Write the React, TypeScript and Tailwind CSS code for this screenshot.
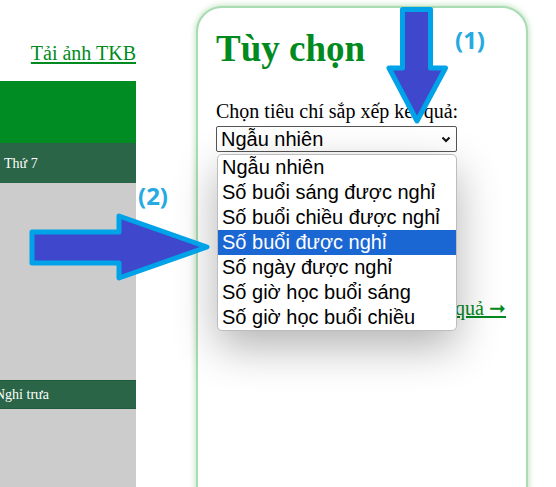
import React from "react";

const options = [
  "Ngẫu nhiên",
  "Số buổi sáng được nghỉ",
  "Số buổi chiều được nghỉ",
  "Số buổi được nghỉ",
  "Số ngày được nghỉ",
  "Số giờ học buổi sáng",
  "Số giờ học buổi chiều",
];

export default function App() {
  return (
    <div className="relative w-[556px] h-[487px] overflow-hidden bg-white flex font-['Liberation_Serif',serif]">
      {/* left column */}
      <div className="w-[136px] shrink-0 flex flex-col">
        <div className="h-[81px] flex items-start justify-end pt-[42px]">
          <a className="text-[20px] leading-[23px] text-[#008a20] underline decoration-[2px] underline-offset-[2px]" href="#">
            Tải ảnh TKB
          </a>
        </div>
        <div className="h-[62px] bg-[#008c22]" />
        <div className="h-[40px] bg-[#2a6547] flex items-center pl-[4px] text-white text-[14px]">Thứ 7</div>
        <div className="flex-1 bg-[#cccccc] flex flex-col">
          <div className="h-[197px]" />
          <div className="h-[29px] bg-[#2a6547] border-y border-[#1f5a3b] flex items-center text-white text-[14px] -ml-[5px] whitespace-nowrap">
            Nghỉ trưa
          </div>
        </div>
      </div>

      {/* card */}
      <div className="ml-[60px] mt-[6px] w-[332px] h-[520px] shrink-0 rounded-[26px] border-2 border-[#a9dcb2] shadow-[0_0_6px_rgba(76,175,80,0.45)] bg-white pl-[18px] pr-[20px] pt-[20px] flex flex-col">
        <h1 className="text-[37px] leading-[42px] font-bold text-[#008a20] whitespace-nowrap">Tùy chọn</h1>
        <div className="mt-[30px] text-[20px] leading-[23px] text-black whitespace-nowrap">Chọn tiêu chí sắp xếp kết quả:</div>
        <div className="mt-[3px] w-[241px] h-[26px] border border-[#555] rounded-[2px] flex items-center justify-between pl-[4px] pr-[5px] font-['Liberation_Sans',Arial,sans-serif] text-[20px] text-black">
          <span className="leading-[24px]">Ngẫu nhiên</span>
          <svg width="10" height="7" viewBox="0 0 10 7">
            <path d="M1.5 1.5 L5 5 L8.5 1.5" fill="none" stroke="#111" strokeWidth="2" />
          </svg>
        </div>
        <div className="mt-[145px] flex justify-end">
          <a href="#" className="text-[20px] leading-[23px] text-[#008a20] underline decoration-[2px]">
            Xem kết quả ➞
          </a>
        </div>
      </div>

      {/* dropdown list overlay */}
      <div className="absolute left-[217px] top-[154px] w-[240px] bg-white border border-[#bdbdbd] rounded-[5px] shadow-[0_16px_44px_rgba(0,0,0,0.3)] font-['Liberation_Sans',Arial,sans-serif] text-[20px] text-black">
        {options.map((o, i) => (
          <div
            key={o}
            className={
              i === 3
                ? "h-[25px] leading-[25px] pl-[4px] bg-[#1a66d2] text-white whitespace-nowrap"
                : "h-[25px] leading-[25px] pl-[4px] whitespace-nowrap"
            }
          >
            {o}
          </div>
        ))}
      </div>

      {/* annotation arrows */}
      <svg className="absolute left-0 top-0" width="556" height="487" viewBox="0 0 556 487">
        <polygon
          points="402.5,9.5 430.5,9.5 430.5,68 445.5,68 417,121 389,68 402.5,68"
          fill="#3f48cc"
          stroke="#00a2e8"
          strokeWidth="5"
          strokeLinejoin="round"
        />
        <polygon
          points="32,232 119,232 119,216 207,247 119,278 119,263 32,263"
          fill="#3f48cc"
          stroke="#00a2e8"
          strokeWidth="5"
          strokeLinejoin="round"
        />
      </svg>
      <div className="absolute left-[455px] top-[24px] text-[24px] leading-[32px] font-bold text-[#27a9e1] font-['Open_Sans',sans-serif]">(1)</div>
      <div className="absolute left-[138px] top-[180px] text-[24px] leading-[32px] font-bold text-[#27a9e1] font-['Open_Sans',sans-serif]">(2)</div>
    </div>
  );
}
